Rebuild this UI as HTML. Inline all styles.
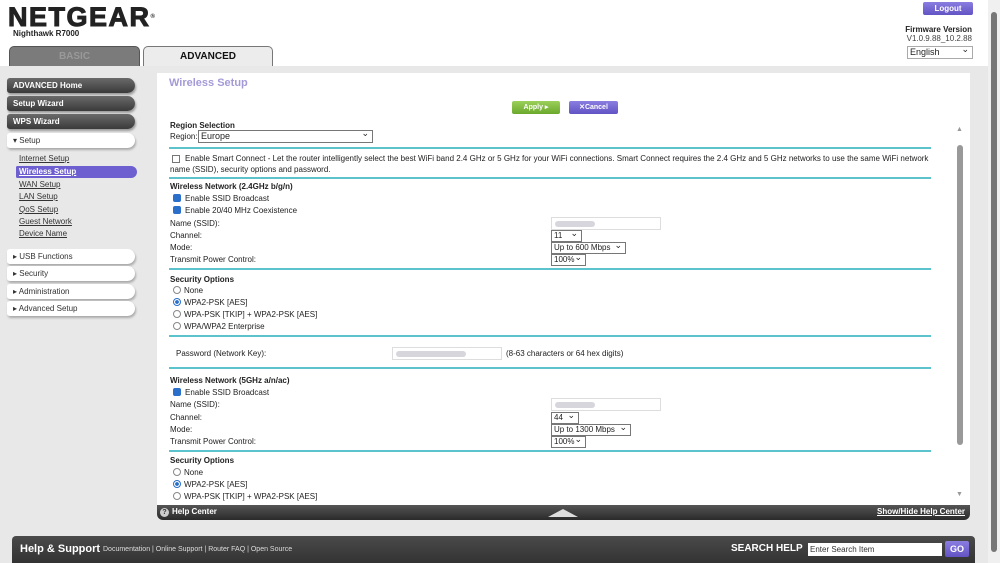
<!DOCTYPE html>
<html><head><style>
*{margin:0;padding:0;box-sizing:border-box}
body{width:1000px;height:563px;overflow:hidden;background:#fff;font-family:"Liberation Sans",sans-serif;position:relative;font-size:8px;color:#222}
.a{position:absolute;white-space:nowrap}
.t{font-size:8px;line-height:10px}
.b{font-weight:bold}
.hl{position:absolute;left:169px;width:762px;height:2px;background:#5cc3cc}
.btn{position:absolute;left:7px;width:128px;height:15px;border-radius:3px 8px 8px 3px;background:linear-gradient(#6a6a6a,#3a3a3a);color:#fff;font-weight:bold;font-size:8px;line-height:15px;padding-left:6px;box-shadow:1px 2px 2px #999}
.wbtn{position:absolute;left:7px;width:128px;height:15px;border-radius:3px 8px 8px 3px;background:#fff;color:#333;font-size:8px;line-height:15px;padding-left:6px;box-shadow:1px 2px 2px #aaa}
.sub{position:absolute;left:19px;font-size:8px;color:#333;text-decoration:underline}
.sel{position:absolute;border:1px solid #777;background:#fff;font-size:8px;line-height:10px;padding-left:2px;height:12px}
.sel:after{content:"⌄";position:absolute;right:3px;top:-3px;font-size:9px}
.inp{position:absolute;border:1px solid #ddd;background:#fff;height:13px}
.blur{position:absolute;top:3px;left:3px;height:6px;background:#d6d6dc;border-radius:3px}
.cb{position:absolute;width:8px;height:8px;border-radius:2px;background:#2a6fc9}
.cb0{position:absolute;width:8px;height:8px;border:1px solid #777;background:#fff}
.rd{position:absolute;width:8px;height:8px;border-radius:50%;border:1px solid #888;background:#fff}
.rd.on{border-color:#2a6fc9;background:radial-gradient(#2a6fc9 40%,#fff 50%)}
</style></head><body>
<div class="a" style="left:8px;top:3px;font-size:27px;font-weight:900;letter-spacing:1.5px;color:#222;-webkit-text-stroke:1px #222;line-height:28px">NETGEAR<span style="font-size:6px;vertical-align:top;-webkit-text-stroke:0">®</span></div>
<div class="a b" style="left:13px;top:29px;font-size:8px">Nighthawk R7000</div>
<div class="a" style="left:9px;top:46px;width:131px;height:21px;background:#7b7b7b;border-radius:5px 5px 0 0;border:1px solid #555;color:#999;font-weight:bold;font-size:10px;text-align:center;line-height:20px">BASIC</div>
<div class="a" style="left:143px;top:46px;width:130px;height:21px;background:#ececec;border-radius:5px 5px 0 0;border:1px solid #777;border-bottom:none;color:#111;font-weight:bold;font-size:10px;text-align:center;line-height:20px">ADVANCED</div>
<div class="a" style="left:923px;top:2px;width:50px;height:13px;background:linear-gradient(#8a7de0,#6253c4);color:#fff;font-weight:bold;font-size:8px;text-align:center;line-height:13px;border-radius:2px">Logout</div>
<div class="a b" style="right:28px;top:25px;font-size:8px">Firmware Version</div>
<div class="a" style="right:28px;top:34px;font-size:8px;color:#444">V1.0.9.88_10.2.88</div>
<div class="sel" style="left:907px;top:46px;width:66px;height:13px;font-size:9px;border-color:#aaa">English</div>
<div class="a" style="left:0;top:66px;width:988px;height:497px;background:#e8e8e8"></div>
<div class="a" style="left:988px;top:0;width:12px;height:563px;background:#f0f0f0"></div>
<div class="a" style="left:991px;top:12px;width:6px;height:540px;background:#777;border-radius:3px"></div>

<div class="btn" style="top:78px">ADVANCED Home</div>
<div class="btn" style="top:96px">Setup Wizard</div>
<div class="btn" style="top:114px">WPS Wizard</div>
<div class="wbtn" style="top:133px">▾ Setup</div>
<div class="sub" style="top:154px">Internet Setup</div>
<div class="a" style="left:16px;top:166px;width:121px;height:12px;background:#6e5fd1;border-radius:2px 8px 8px 2px;color:#fff;font-weight:bold;font-size:8px;line-height:12px;padding-left:3px;text-decoration:underline">Wireless Setup</div>
<div class="sub" style="top:180px">WAN Setup</div>
<div class="sub" style="top:192px">LAN Setup</div>
<div class="sub" style="top:205px">QoS Setup</div>
<div class="sub" style="top:217px">Guest Network</div>
<div class="sub" style="top:229px">Device Name</div>
<div class="wbtn" style="top:249px">▸ USB Functions</div>
<div class="wbtn" style="top:266px">▸ Security</div>
<div class="wbtn" style="top:284px">▸ Administration</div>
<div class="wbtn" style="top:301px">▸ Advanced Setup</div>

<div class="a" style="left:157px;top:73px;width:813px;height:440px;background:#fff"></div>
<div class="a b" style="left:169px;top:77px;font-size:11px;color:#a49ad8">Wireless Setup</div>
<div class="a" style="left:512px;top:101px;width:48px;height:13px;background:linear-gradient(#9cd05a,#6aa82c);color:#fff;font-weight:bold;font-size:7px;text-align:center;line-height:13px;border-radius:2px">Apply ▸</div>
<div class="a" style="left:569px;top:101px;width:49px;height:13px;background:linear-gradient(#8a7de0,#6253c4);color:#fff;font-weight:bold;font-size:7px;text-align:center;line-height:13px;border-radius:2px">✕Cancel</div>
<div class="a" style="left:956px;top:126px;font-size:7px;color:#999">▲</div>
<div class="a" style="left:957px;top:145px;width:6px;height:300px;background:#999;border-radius:3px"></div>
<div class="a" style="left:956px;top:491px;font-size:7px;color:#999">▼</div>

<div class="a t b" style="left:170px;top:121px">Region Selection</div>
<div class="a t" style="left:170px;top:132px">Region:</div>
<div class="sel" style="left:198px;top:130px;width:175px;height:13px;font-size:9px">Europe</div>
<div class="hl" style="top:147px"></div>
<div class="cb0" style="left:172px;top:155px"></div>
<div class="a t" style="left:185px;top:154px">Enable Smart Connect - Let the router intelligently select the best WiFi band 2.4 GHz or 5 GHz for your WiFi connections. Smart Connect requires the 2.4 GHz and 5 GHz networks to use the same WiFi network</div>
<div class="a t" style="left:170px;top:165px">name (SSID), security options and password.</div>
<div class="hl" style="top:177px"></div>
<div class="a t b" style="left:170px;top:182px">Wireless Network (2.4GHz b/g/n)</div>
<div class="cb" style="left:173px;top:194px"></div><div class="a t" style="left:185px;top:194px">Enable SSID Broadcast</div>
<div class="cb" style="left:173px;top:206px"></div><div class="a t" style="left:185px;top:206px">Enable 20/40 MHz Coexistence</div>
<div class="a t" style="left:170px;top:219px">Name (SSID):</div>
<div class="inp" style="left:551px;top:217px;width:110px"><div class="blur" style="width:40px"></div></div>
<div class="a t" style="left:170px;top:231px">Channel:</div>
<div class="sel" style="left:551px;top:230px;width:31px">11</div>
<div class="a t" style="left:170px;top:243px">Mode:</div>
<div class="sel" style="left:551px;top:242px;width:75px">Up to 600 Mbps</div>
<div class="a t" style="left:170px;top:255px">Transmit Power Control:</div>
<div class="sel" style="left:551px;top:254px;width:35px">100%</div>
<div class="hl" style="top:268px"></div>
<div class="a t b" style="left:170px;top:275px">Security Options</div>
<div class="rd" style="left:173px;top:286px"></div><div class="a t" style="left:184px;top:286px">None</div>
<div class="rd on" style="left:173px;top:298px"></div><div class="a t" style="left:184px;top:298px">WPA2-PSK [AES]</div>
<div class="rd" style="left:173px;top:310px"></div><div class="a t" style="left:184px;top:310px">WPA-PSK [TKIP] + WPA2-PSK [AES]</div>
<div class="rd" style="left:173px;top:322px"></div><div class="a t" style="left:184px;top:322px">WPA/WPA2 Enterprise</div>
<div class="hl" style="top:335px"></div>
<div class="a t" style="left:176px;top:349px">Password (Network Key):</div>
<div class="inp" style="left:392px;top:347px;width:110px"><div class="blur" style="width:70px"></div></div>
<div class="a t" style="left:506px;top:349px">(8-63 characters or 64 hex digits)</div>
<div class="hl" style="top:367px"></div>
<div class="a t b" style="left:170px;top:376px">Wireless Network (5GHz a/n/ac)</div>
<div class="cb" style="left:173px;top:388px"></div><div class="a t" style="left:185px;top:388px">Enable SSID Broadcast</div>
<div class="a t" style="left:170px;top:400px">Name (SSID):</div>
<div class="inp" style="left:551px;top:398px;width:110px"><div class="blur" style="width:40px"></div></div>
<div class="a t" style="left:170px;top:413px">Channel:</div>
<div class="sel" style="left:551px;top:412px;width:28px">44</div>
<div class="a t" style="left:170px;top:425px">Mode:</div>
<div class="sel" style="left:551px;top:424px;width:80px">Up to 1300 Mbps</div>
<div class="a t" style="left:170px;top:437px">Transmit Power Control:</div>
<div class="sel" style="left:551px;top:436px;width:35px">100%</div>
<div class="hl" style="top:450px"></div>
<div class="a t b" style="left:170px;top:456px">Security Options</div>
<div class="rd" style="left:173px;top:468px"></div><div class="a t" style="left:184px;top:468px">None</div>
<div class="rd on" style="left:173px;top:480px"></div><div class="a t" style="left:184px;top:480px">WPA2-PSK [AES]</div>
<div class="rd" style="left:173px;top:492px"></div><div class="a t" style="left:184px;top:492px">WPA-PSK [TKIP] + WPA2-PSK [AES]</div>

<div class="a" style="left:157px;top:505px;width:813px;height:15px;background:linear-gradient(#555,#2a2a2a);border-radius:0 0 6px 6px"></div>
<div class="a" style="left:160px;top:508px;width:9px;height:9px;border-radius:50%;background:#ccc;color:#333;font-size:7px;text-align:center;line-height:9px;font-weight:bold">?</div>
<div class="a b" style="left:172px;top:507px;color:#fff;font-size:8px">Help Center</div>
<div class="a" style="left:548px;top:509px;width:0;height:0;border-left:15px solid transparent;border-right:15px solid transparent;border-bottom:8px solid #ddd"></div>
<div class="a b" style="left:877px;top:507px;color:#fff;font-size:8px;text-decoration:underline">Show/Hide Help Center</div>

<div class="a" style="left:12px;top:536px;width:963px;height:27px;background:linear-gradient(#4a4a4a,#333);border-radius:4px 4px 0 0"></div>
<div class="a b" style="left:20px;top:543px;color:#fff;font-size:11px">Help &amp; Support</div>
<div class="a" style="left:103px;top:546px;color:#ddd;font-size:7px">Documentation | Online Support | Router FAQ | Open Source</div>
<div class="a b" style="left:731px;top:543px;color:#fff;font-size:10px">SEARCH HELP</div>
<div class="a" style="left:808px;top:543px;width:134px;height:13px;background:#fff;color:#333;font-size:8px;line-height:13px;padding-left:2px">Enter Search Item</div>
<div class="a" style="left:945px;top:541px;width:24px;height:16px;background:linear-gradient(#8a7de0,#6253c4);color:#fff;font-weight:bold;font-size:9px;text-align:center;line-height:16px;border-radius:2px">GO</div>
</body></html>
